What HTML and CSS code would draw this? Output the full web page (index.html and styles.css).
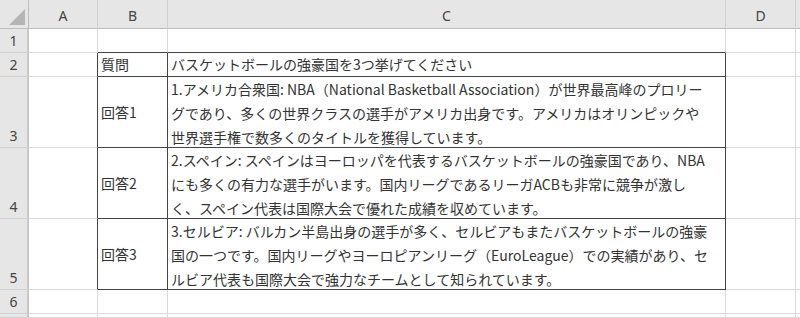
FILE: index.html
```html
<!DOCTYPE html>
<html lang="ja">
<head>
<meta charset="utf-8">
<link rel="stylesheet" href="styles.css">
</head>
<body>
<div class="sheet">
  <div class="hd corner"><svg width="18" height="18" viewBox="0 0 18 18"><polygon points="1,17 17,17 17,1" fill="#b5b5b5"/></svg></div>
  <div class="hd col">A</div>
  <div class="hd col">B</div>
  <div class="hd col">C</div>
  <div class="hd col">D</div>
  <div class="hd col edge"></div>

  <div class="hd row mid">1</div>
  <div class="c"></div>
  <div class="c tb-b"></div>
  <div class="c tb-b"></div>
  <div class="c"></div>
  <div class="c edge"></div>

  <div class="hd row mid">2</div>
  <div class="c tb-r"></div>
  <div class="c tb-r tb-b txt">質問</div>
  <div class="c tb-r tb-b txt">バスケットボールの強豪国を3つ挙げてください</div>
  <div class="c"></div>
  <div class="c edge"></div>

  <div class="hd row">3</div>
  <div class="c tb-r"></div>
  <div class="c tb-r tb-b txt">回答1</div>
  <div class="c tb-r tb-b txt multi">
    <div class="ln">1.アメリカ合衆国: NBA（National Basketball Association）が世界最高峰のプロリー</div>
    <div class="ln">グであり、多くの世界クラスの選手がアメリカ出身です。アメリカはオリンピックや</div>
    <div class="ln">世界選手権で数多くのタイトルを獲得しています。</div>
  </div>
  <div class="c"></div>
  <div class="c edge"></div>

  <div class="hd row">4</div>
  <div class="c tb-r"></div>
  <div class="c tb-r tb-b txt">回答2</div>
  <div class="c tb-r tb-b txt multi">
    <div class="ln">2.スペイン: スペインはヨーロッパを代表するバスケットボールの強豪国であり、NBA</div>
    <div class="ln">にも多くの有力な選手がいます。国内リーグであるリーガACBも非常に競争が激し</div>
    <div class="ln">く、スペイン代表は国際大会で優れた成績を収めています。</div>
  </div>
  <div class="c"></div>
  <div class="c edge"></div>

  <div class="hd row">5</div>
  <div class="c tb-r"></div>
  <div class="c tb-r tb-b txt">回答3</div>
  <div class="c tb-r tb-b txt multi">
    <div class="ln">3.セルビア: バルカン半島出身の選手が多く、セルビアもまたバスケットボールの強豪</div>
    <div class="ln">国の一つです。国内リーグやヨーロピアンリーグ（EuroLeague）での実績があり、セ</div>
    <div class="ln">ルビア代表も国際大会で強力なチームとして知られています。</div>
  </div>
  <div class="c"></div>
  <div class="c edge"></div>

  <div class="hd row mid">6</div>
  <div class="c"></div>
  <div class="c"></div>
  <div class="c"></div>
  <div class="c"></div>
  <div class="c edge"></div>

  <div class="hd row"></div>
  <div class="c"></div>
  <div class="c"></div>
  <div class="c"></div>
  <div class="c"></div>
  <div class="c edge"></div>
</div>
</body>
</html>
```

FILE: styles.css
```css
html, body {
  margin: 0;
  padding: 0;
  background: #ffffff;
  overflow: hidden;
}

.sheet {
  display: grid;
  grid-template-columns: 29px 69px 70px 558px 70px 4px;
  grid-template-rows: 29px 24px 24px 71px 71px 71px 24px 4px;
  width: 800px;
  height: 318px;
  font-family: "Noto Sans CJK JP", "Noto Sans", sans-serif;
  font-size: 14px;
  color: #333333;
}

.sheet > div {
  box-sizing: border-box;
  border-right: 1px solid #d9d9d9;
  border-bottom: 1px solid #d9d9d9;
  overflow: hidden;
}

.hd {
  background: #e6e6e6;
  color: #444444;
  font-family: "Noto Sans", "Noto Sans CJK JP", sans-serif;
  font-size: 14px;
  display: flex;
  justify-content: center;
}

.corner {
  align-items: flex-end;
  justify-content: flex-end;
  padding: 0 2px 2px 0;
  border-right: 1px solid #bdbdbd !important;
  border-bottom: 1px solid #bdbdbd !important;
}

.corner svg {
  display: block;
}

.col {
  align-items: flex-end;
  padding-bottom: 3px;
  border-right: 1px solid #d0d0d0 !important;
  border-bottom: 1px solid #bdbdbd !important;
  line-height: 18px;
}

.row {
  align-items: flex-end;
  padding-bottom: 1px;
  border-right: 2px solid #c8c8c8 !important;
  border-bottom: 1px solid #d0d0d0 !important;
  line-height: 20px;
}

.row.mid {
  align-items: center;
  padding-bottom: 0;
}

.edge {
  border-right: none !important;
}

.c.tb-r {
  border-right: 1px solid #444444;
}

.c.tb-b {
  border-bottom: 1px solid #444444;
}

.txt {
  display: flex;
  flex-direction: column;
  justify-content: center;
  padding-left: 3px;
  white-space: nowrap;
  line-height: 23px;
}

.multi {
  justify-content: flex-start;
  line-height: 24px;
}

.ln {
  white-space: nowrap;
}
```
